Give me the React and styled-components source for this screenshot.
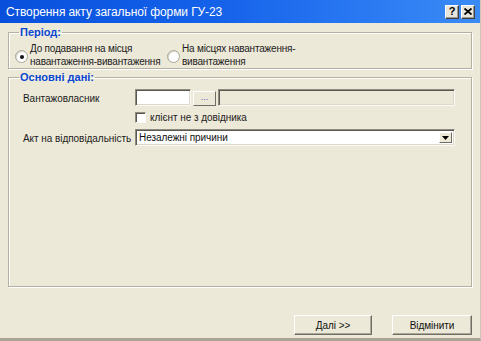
import React from 'react';
import styled, { createGlobalStyle } from 'styled-components';

const GlobalStyle = createGlobalStyle`
  html, body {
    margin: 0;
    padding: 0;
    background: #ece9d8;
  }
  body {
    font-family: "Liberation Sans", Arial, sans-serif;
    font-size: 10px;
    letter-spacing: -0.05px;
    color: #1a1a1a;
  }
`;

const Window = styled.div`
  width: 481px;
  height: 341px;
  box-sizing: border-box;
  display: flex;
  flex-direction: column;
  background: #ece9d8;
  border-right: 1px solid #c8c5b4;
  border-bottom: 3px solid #a8a595;
`;

const TitleBar = styled.div`
  height: 23px;
  flex: none;
  display: flex;
  align-items: center;
  padding: 0 5px 0 5px;
  background: linear-gradient(90deg, #0850dc 0%, #1562ea 45%, #2d7cf3 80%, #3b8bf6 100%);
`;

const Title = styled.div`
  flex: 1;
  color: #fff;
  font-family: "Liberation Sans", Arial, sans-serif;
  font-size: 12px;
  letter-spacing: -0.1px;
  padding-left: 1px;
  padding-top: 1px;
`;

const CaptionButton = styled.div`
  width: 14px;
  height: 14px;
  box-sizing: border-box;
  margin-left: ${({ gap }) => gap || 0}px;
  background: #e8e6dc;
  border-top: 1px solid #fff;
  border-left: 1px solid #fff;
  border-right: 1px solid #404040;
  border-bottom: 1px solid #404040;
  box-shadow: inset -1px -1px #9a988c;
  display: flex;
  align-items: center;
  justify-content: center;
  font-family: "Liberation Sans", Arial, sans-serif;
  font-weight: bold;
  font-size: 11px;
  color: #000;
  line-height: 1;
`;

const Body = styled.div`
  flex: 1;
  display: flex;
  flex-direction: column;
  padding: 3px 8px 0 8px;
`;

const Group = styled.fieldset`
  margin: ${({ top }) => top || 0}px 0 0 0;
  padding: ${({ pad }) => pad};
  border: 1px solid #b4b1a2;
  box-shadow: inset 1px 1px #fff, 1px 1px #fff;
  min-width: 0;
  flex: ${({ grow }) => (grow ? 1 : 'none')};
`;

const Legend = styled.legend`
  padding: 0 1px;
  margin-left: ${({ indent }) => indent}px;
  color: #0a46d2;
  font-weight: bold;
  font-size: 11px;
  letter-spacing: 0;
  line-height: 13px;
`;

const RadioRow = styled.div`
  display: flex;
  align-items: center;
  line-height: 13px;
  letter-spacing: -0.2px;
  white-space: nowrap;
  padding-top: 1px;
`;

const RadioOption = styled.label`
  display: flex;
  align-items: center;
  width: ${({ w }) => w}px;
  color: #1c1c1c;
`;

const RadioCircle = styled.span`
  width: 11px;
  height: 11px;
  flex: none;
  border-radius: 50%;
  background: #fff;
  border: 1px solid #a9a697;
  box-shadow: inset 1px 1px #d8d5c8;
  display: flex;
  align-items: center;
  justify-content: center;
  margin-right: 2px;
  margin-top: 3px;

  &::after {
    content: '';
    width: 4px;
    height: 4px;
    border-radius: 50%;
    background: ${({ checked }) => (checked ? '#111' : 'transparent')};
  }
`;

const Form = styled.div`
  display: grid;
  grid-template-columns: 112px 1fr;
  row-gap: 5px;
  align-items: center;
  white-space: nowrap;
`;

const Label = styled.div`
  color: #1c1c1c;
  padding-top: 1px;
`;

const Line = styled.div`
  display: flex;
  align-items: center;
  height: ${({ h }) => h}px;
`;

const Sunken = styled.div`
  box-sizing: border-box;
  height: 17px;
  width: ${({ w }) => (w ? `${w}px` : 'auto')};
  flex: ${({ w }) => (w ? 'none' : 1)};
  background: ${({ disabled }) => (disabled ? '#ece9d8' : '#fff')};
  border-top: 1px solid #8e8c80;
  border-left: 1px solid #8e8c80;
  border-right: 1px solid #fbfaf6;
  border-bottom: 1px solid #fbfaf6;
  box-shadow: inset 1px 1px #5a5850, inset -1px -1px #dcd9cb;
  display: flex;
  align-items: center;
  padding: 0 2px 0 3px;
`;

const DotsButton = styled.div`
  box-sizing: border-box;
  width: 23px;
  height: 15px;
  margin: 2px 2px 0 2px;
  background: #ece9d8;
  border-top: 1px solid #fff;
  border-left: 1px solid #fff;
  border-right: 1px solid #6f6d63;
  border-bottom: 1px solid #6f6d63;
  display: flex;
  align-items: center;
  justify-content: center;
  color: #5a5ab8;
  font-size: 9px;
  line-height: 1;
  padding-bottom: 2px;
`;

const CheckRow = styled.label`
  display: flex;
  align-items: center;
  height: 13px;
  color: #1c1c1c;
`;

const CheckBox = styled.span`
  width: 11px;
  height: 11px;
  box-sizing: border-box;
  background: #fff;
  border-top: 1px solid #8e8c80;
  border-left: 1px solid #8e8c80;
  border-right: 1px solid #fbfaf6;
  border-bottom: 1px solid #fbfaf6;
  box-shadow: inset 1px 1px #5a5850;
  margin-right: 4px;
`;

const ComboText = styled.span`
  flex: 1;
  color: #111;
`;

const ArrowButton = styled.span`
  box-sizing: border-box;
  width: 13px;
  height: 11px;
  background: #ece9d8;
  border-top: 1px solid #fff;
  border-left: 1px solid #fff;
  border-right: 1px solid #6f6d63;
  border-bottom: 1px solid #6f6d63;
  display: flex;
  align-items: center;
  justify-content: center;
`;

const Footer = styled.div`
  display: flex;
  justify-content: flex-end;
  gap: 20px;
  padding: 28px 0 3px 0;
`;

const Button = styled.div`
  box-sizing: border-box;
  width: ${({ w }) => w}px;
  height: 20px;
  background: #ece9d8;
  border-top: 1px solid #fff;
  border-left: 1px solid #fff;
  border-right: 1px solid #706e64;
  border-bottom: 1px solid #706e64;
  box-shadow: inset -1px -1px #aca899;
  display: flex;
  align-items: center;
  justify-content: center;
  color: #111;
`;

const CloseIcon = () => (
  <svg width="8" height="7" viewBox="0 0 8 7">
    <path d="M0.5 0.5 L7.5 6.5 M7.5 0.5 L0.5 6.5" stroke="#000" strokeWidth="1.8" />
  </svg>
);

const DownArrow = () => (
  <svg width="7" height="4" viewBox="0 0 7 4">
    <path d="M0 0 H7 L3.5 4 Z" fill="#000" />
  </svg>
);

export default function App() {
  return (
    <>
      <GlobalStyle />
      <Window>
        <TitleBar>
          <Title>Створення акту загальної форми ГУ-23</Title>
          <CaptionButton>?</CaptionButton>
          <CaptionButton gap={2}>
            <CloseIcon />
          </CaptionButton>
        </TitleBar>
        <Body>
          <Group pad="2px 6px 0 6px">
            <Legend indent={4}>Період:</Legend>
            <RadioRow>
              <RadioOption w={152}>
                <RadioCircle checked />
                <span>
                  До подавання на місця
                  <br />
                  навантаження-вивантаження
                </span>
              </RadioOption>
              <RadioOption w={200}>
                <RadioCircle />
                <span>
                  На місцях навантаження-
                  <br />
                  вивантаження
                </span>
              </RadioOption>
            </RadioRow>
          </Group>
          <Group grow top={2} pad="5px 16px 0 14px">
            <Legend indent={-4}>Основні дані:</Legend>
            <Form>
              <Label>Вантажовласник</Label>
              <Line h={17}>
                <Sunken w={56} />
                <DotsButton>...</DotsButton>
                <Sunken disabled />
              </Line>
              <div />
              <CheckRow>
                <CheckBox />
                клієнт не з довідника
              </CheckRow>
              <Label>Акт на відповідальність</Label>
              <Line h={17}>
                <Sunken>
                  <ComboText>Незалежні причини</ComboText>
                  <ArrowButton>
                    <DownArrow />
                  </ArrowButton>
                </Sunken>
              </Line>
            </Form>
          </Group>
          <Footer>
            <Button w={78}>Далі &gt;&gt;</Button>
            <Button w={80}>Відмінити</Button>
          </Footer>
        </Body>
      </Window>
    </>
  );
}
